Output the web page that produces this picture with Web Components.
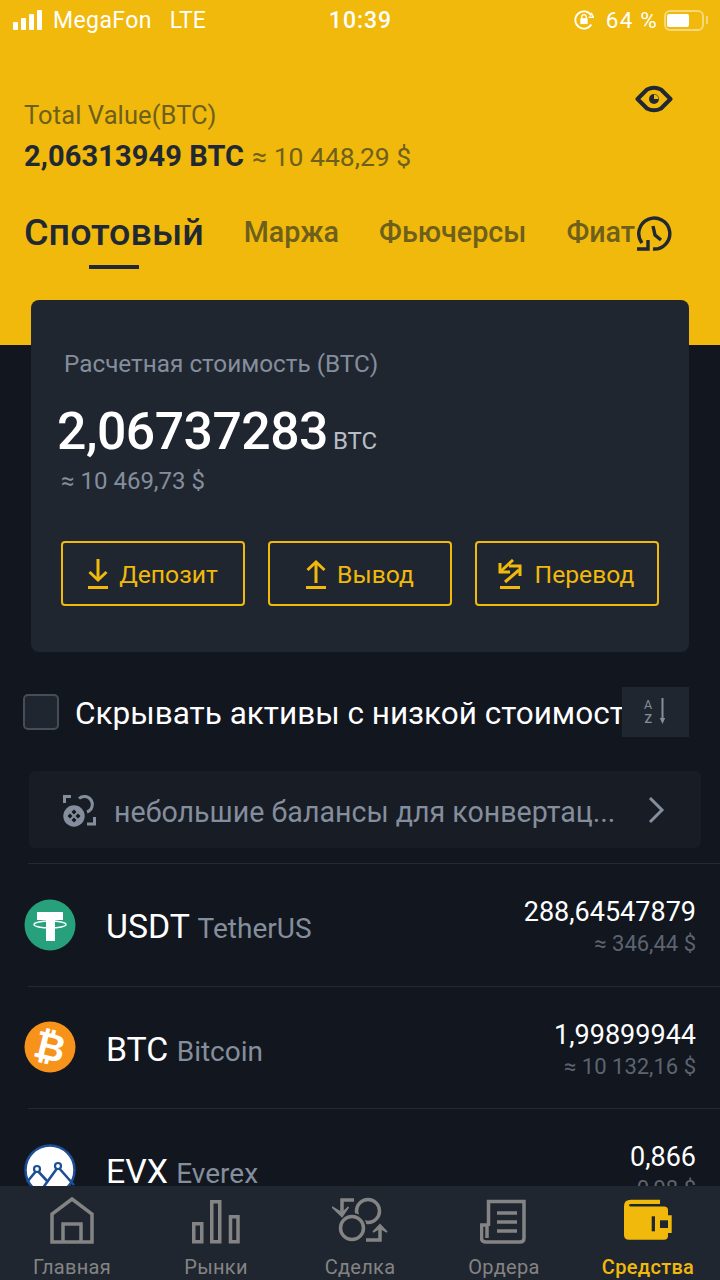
<!DOCTYPE html>
<html>
<head>
<meta charset="utf-8">
<title>Wallet</title>
<style>
    html, body { margin: 0; padding: 0; background: #12161f; }
    body { font-family: Roboto, "Liberation Sans", sans-serif; }
</style>
</head>
<body>
<wallet-app>
    <status-bar></status-bar>
    <wallet-header></wallet-header>
    <spot-card></spot-card>
    <low-filter></low-filter>
    <convert-banner></convert-banner>
    <asset-row coin="usdt" symbol="USDT" name="TetherUS" amount="288,64547879" fiat="≈ 346,44 $"></asset-row>
    <asset-row coin="btc" symbol="BTC" name="Bitcoin" amount="1,99899944" fiat="≈ 10 132,16 $"></asset-row>
    <asset-row coin="evx" symbol="EVX" name="Everex" amount="0,866" fiat="0,98 $"></asset-row>
    <tab-bar slot="nav"></tab-bar>
</wallet-app>

<script>
const ICONS = {
    eye: `<svg width="38" height="28" viewBox="0 0 38 28" fill="none"><path d="M2.5 14 L12 4.5 Q19 1 26 4.5 L35.5 14 L26 23.5 Q19 27 12 23.5 Z" stroke="#212833" stroke-width="4" stroke-linejoin="round"/><circle cx="19" cy="14" r="5" fill="#212833"/><path d="M19 14V9.5A4.5 4.5 0 0 1 23.5 14Z" fill="#f0b90b"/></svg>`,
    history: `<svg width="38" height="38" viewBox="0 0 38 38" fill="none" stroke="#212833" stroke-width="3.4"><path d="M8 28A15.500 15.500 0 1 1 19 34"/><path d="M3 34H14V25"/><path d="M19 11L21 20L27 25"/></svg>`,
    down: `<svg width="26" height="30" viewBox="0 0 26 30" fill="none" stroke="#f0b90b" stroke-width="3"><path d="M13 0V20"/><path d="M4.5 13L13 21L21.500 13"/><path d="M3 28.500H23"/></svg>`,
    up: `<svg width="26" height="30" viewBox="0 0 26 30" fill="none" stroke="#f0b90b" stroke-width="3"><path d="M13 3V24"/><path d="M4.500 11L13 3L21.500 11"/><path d="M3 28.500H23"/></svg>`,
    transfer: `<svg width="26" height="30" viewBox="0 0 26 30" fill="none" stroke="#f0b90b" stroke-width="3"><path d="M16 1L4 12"/><path d="M3 4V13H13"/><path d="M8 23L22 11"/><path d="M12 7H23V17"/><path d="M3 28.500H23"/></svg>`,
    sort: `<svg width="24" height="28" viewBox="0 0 24 28" fill="none"><text x="0" y="11" font-family="Roboto, sans-serif" font-size="12.500" fill="#848e9c">A</text><text x="0.500" y="25" font-family="Roboto, sans-serif" font-size="12.500" font-weight="500" fill="#848e9c">Z</text><path d="M18.500 0V21" stroke="#848e9c" stroke-width="2"/><path d="M15.800 20H21.200L18.500 26Z" fill="#848e9c"/></svg>`,
    convert: `<svg width="36" height="36" viewBox="0 0 36 36" fill="none"><path d="M3.500 11V4.500H10" stroke="#848e9c" stroke-width="3"/><path d="M33.500 25V32H26" stroke="#848e9c" stroke-width="3"/><path d="M18 6.500A8 8 0 1 1 26 20" stroke="#848e9c" stroke-width="3"/><circle cx="13" cy="24" r="10.700" fill="#848e9c"/><path d="M13 17.500L15.500 20L13 22.500L10.500 20ZM13 25.500L15.500 28L13 30.500L10.500 28ZM9 21.500L11.500 24L9 26.500L6.500 24ZM17 21.500L19.500 24L17 26.500L14.500 24Z" fill="#12161f"/></svg>`,
    chevron: `<svg width="18" height="28" viewBox="0 0 18 28" fill="none" stroke="#848e9c" stroke-width="3"><path d="M3 2L15 14L3 26"/></svg>`,
    usdt: `<svg width="52" height="52" viewBox="0 0 52 52"><circle cx="26" cy="26" r="25.500" fill="#26a17b"/><path d="M13 13H39V21H31V42H22V21H13Z" fill="#fff"/><ellipse cx="26" cy="25.500" rx="16" ry="3.500" fill="none" stroke="#fff" stroke-width="1.400"/></svg>`,
    btc: `<svg width="52" height="52" viewBox="0 0 52 52"><circle cx="26" cy="26" r="25.500" fill="#f7931a"/><text x="26" y="39" text-anchor="middle" font-family="Roboto, sans-serif" font-size="38" font-weight="700" fill="#fff" transform="rotate(14 26 26)">₿</text></svg>`,
    evx: `<svg width="52" height="52" viewBox="0 0 52 52"><circle cx="26" cy="26" r="24.500" fill="#fff" stroke="#1d4f97" stroke-width="2.500"/><path d="M3 38L13 26L24 38" fill="none" stroke="#1d4f97" stroke-width="2.600"/><path d="M13 52L34 23L50 41" fill="none" stroke="#1d4f97" stroke-width="2.600"/><circle cx="13" cy="25" r="3" fill="#fff" stroke="#1d4f97" stroke-width="2.200"/><circle cx="34" cy="22" r="3" fill="#fff" stroke="#1d4f97" stroke-width="2.200"/></svg>`,
    home: `<svg width="44" height="48" viewBox="0 0 44 48" fill="none" stroke="#848484" stroke-width="3.500"><path d="M2 46V18L22 3L42 18V46Z"/><path d="M13 46V28H31V46"/></svg>`,
    markets: `<svg width="48" height="48" viewBox="0 0 48 48" fill="none" stroke="#848484" stroke-width="3.500"><rect x="1.750" y="27.750" width="8" height="18"/><rect x="19.750" y="5.750" width="8" height="40"/><rect x="38.500" y="20.750" width="7.500" height="25"/></svg>`,
    trade: `<svg width="56" height="50" viewBox="0 0 56 50" fill="none" stroke="#848484" stroke-width="3.500"><circle cx="36" cy="16" r="11.500"/><circle cx="20" cy="33" r="11.500" fill="#202630" stroke="#202630" stroke-width="7"/><circle cx="20" cy="33" r="11.500"/><path d="M22 5H10V17"/><path d="M0 12L10 21.500L16.500 12L10 18Z" fill="#848484" stroke="#848484" stroke-width="1.500"/><path d="M34 45H48V31"/><path d="M41 37L48 29.500L55 37L48 33Z" fill="#848484" stroke="#848484" stroke-width="1.500"/></svg>`,
    orders: `<svg width="48" height="48" viewBox="0 0 48 48" fill="none" stroke="#848484" stroke-width="3.500"><path d="M8.500 30V5.500H44V42Q44 46 40 46H6Q1.500 46 1.500 42V29H7V42"/><path d="M17 17H37M17 26H37M17 35H37"/></svg>`,
    wallet: `<svg width="48" height="44" viewBox="0 0 48 44"><path d="M7 1.700H36V6H7Q5 6 5 7Q5 8.500 7 8.500H40Q44 8.500 44 12V17.300H47.700V35H44V38Q44 41.700 40 41.700H5Q0 41.700 0 37V8Q0 1.700 7 1.700Z" fill="#f0b90b"/><rect x="27.700" y="18.300" width="3.300" height="15" fill="#202630"/><rect x="36" y="22.300" width="8" height="7.700" fill="#202630"/></svg>`
};

class WalletApp extends HTMLElement {
    constructor() {
        super();
        this.attachShadow({ mode: 'open' });
        this.shadowRoot.innerHTML = `
        <style>
            :host {
                display: block;
                position: relative;
                width: 720px;
                height: 1280px;
                overflow: hidden;
                background: #12161f;
            }
            ::slotted([slot="nav"]) {
                position: absolute;
                left: 0;
                right: 0;
                bottom: 0;
            }
        </style>
        <slot></slot>
        <slot name="nav"></slot>`;
    }
}

class StatusBar extends HTMLElement {
    constructor() {
        super();
        this.attachShadow({ mode: 'open' });
        this.shadowRoot.innerHTML = `
        <style>
            :host {
                display: grid;
                grid-template-columns: 1fr auto 1fr;
                align-items: center;
                height: 40px;
                padding: 0 12px 0 13px;
                background: #f0b90b;
                color: #fff;
                font: 400 23px Roboto, sans-serif;
            }
            .left, .right { display: flex; align-items: center; }
            .right { justify-content: flex-end; }
            .bars { display: flex; align-items: flex-end; gap: 3px; margin-right: 11px; height: 20px; }
            .bars i { display: block; width: 5px; background: #fff; border-radius: 1px; }
            .name { letter-spacing: .4px; }
            .lte { margin-left: 18px; }
            .time { font-weight: 500; letter-spacing: 1px; }
            .pct { margin: 0 6px 0 12px; font-size: 22.500px; letter-spacing: 1.200px; }
            .battery { position: relative; width: 40px; height: 21px; border: 2px solid rgba(255,255,255,.45); border-radius: 6px; box-sizing: border-box; }
            .battery::before { content: ""; position: absolute; left: 1px; top: 2px; bottom: 2px; width: 22px; background: #fff; border-radius: 2px; }
            .cap { width: 2px; height: 8px; margin-left: 2px; background: rgba(255,255,255,.45); }
        </style>
        <div class="left">
            <div class="bars"><i style="height:8px"></i><i style="height:12px"></i><i style="height:16px"></i><i style="height:20px"></i></div>
            <span class="name">MegaFon</span><span class="lte">LTE</span>
        </div>
        <div class="time">10:39</div>
        <div class="right">
            <svg width="20" height="20" viewBox="0 0 22 22" fill="none" stroke="#fff" stroke-width="2"><path d="M19 6A9.500 9.500 0 1 0 19 16"/><path d="M16 8L21.500 8L19 3" stroke-width="1.500"/><rect x="7" y="9" width="8" height="6.500" fill="#fff" stroke="none"/><path d="M8.500 9V7.500A2.500 2.500 0 0 1 13.500 7.500V9" stroke-width="1.400"/></svg>
            <span class="pct">64 %</span>
            <div class="battery"></div><div class="cap"></div>
        </div>`;
    }
}

class WalletHeader extends HTMLElement {
    constructor() {
        super();
        this.attachShadow({ mode: 'open' });
        this.shadowRoot.innerHTML = `
        <style>
            :host {
                display: block;
                position: relative;
                height: 305px;
                box-sizing: border-box;
                padding: 60px 0 0 24px;
                background: #f0b90b;
                color: #212833;
                overflow: hidden;
            }
            .label { font-size: 25.500px; line-height: 30px; color: #6e5f1c; letter-spacing: .1px; }
            .total { display: flex; align-items: baseline; margin-top: 10px; line-height: 32px; }
            .total b { font-size: 29px; font-weight: 700; letter-spacing: .1px; }
            .total span { margin-left: 8px; font-size: 26.500px; color: #6e5f1c; }
            .eye { position: absolute; right: 47px; top: 45px; }
            .tabs { display: flex; align-items: center; margin-top: 37px; white-space: nowrap; }
            .tab { font-size: 28.700px; color: #6e5f1c; margin-left: 40px; font-weight: 500; }
            .tab.on { font-size: 37.700px; font-weight: 500; color: #212833; margin-left: 0; }
            .bar { width: 50px; height: 3.500px; margin: 11px 0 0 65px; background: #212833; }
            .history { position: absolute; right: 48px; top: 175px; }
        </style>
        <div class="label">Total Value(BTC)</div>
        <div class="total"><b>2,06313949 BTC</b><span>≈ 10 448,29 $</span></div>
        <div class="tabs">
            <div class="tab on">Спотовый</div>
            <div class="tab">Маржа</div>
            <div class="tab">Фьючерсы</div>
            <div class="tab">Фиат</div>
        </div>
        <div class="bar"></div>
        <div class="eye">${ICONS.eye}</div>
        <div class="history">${ICONS.history}</div>`;
    }
}

class ActionButton extends HTMLElement {
    constructor() {
        super();
        this.attachShadow({ mode: 'open' });
        this.shadowRoot.innerHTML = `
        <style>
            :host {
                display: flex;
                align-items: center;
                justify-content: center;
                gap: 8px;
                box-sizing: border-box;
                height: 65px;
                padding-right: 3px;
                border: 2px solid #f0b90b;
                border-radius: 4px;
                color: #f0b90b;
                font-size: 24.700px;
            }
            svg { display: block; }
            .text { padding-top: 1px; }
        </style>
        <span id="icon"></span><span class="text"><slot></slot></span>`;
    }

    connectedCallback() {
        this.shadowRoot.getElementById('icon').innerHTML = ICONS[this.getAttribute('icon')];
    }
}

class SpotCard extends HTMLElement {
    constructor() {
        super();
        this.attachShadow({ mode: 'open' });
        this.shadowRoot.innerHTML = `
        <style>
            :host {
                display: block;
                position: relative;
                box-sizing: border-box;
                width: 658px;
                height: 352px;
                margin: -45px 0 0 31px;
                padding: 50px 30px 0 30px;
                background: #202630;
                border-radius: 8px;
                color: #848e9c;
            }
            .label { margin-left: 3px; font-size: 24.300px; line-height: 28px; }
            .value { display: flex; align-items: baseline; margin: 24px 0 0 -4px; color: #fff; line-height: 60px; }
            .value b { font-size: 51.700px; font-weight: 500; letter-spacing: -.5px; }
            .value span { margin-left: 5px; font-size: 24px; color: #b7bdc6; }
            .fiat { margin-top: -5px; font-size: 24px; line-height: 30px; }
            .actions { display: grid; grid-template-columns: repeat(3, 184px); gap: 23px; margin-top: 45px; }
        </style>
        <div class="label">Расчетная стоимость (BTC)</div>
        <div class="value"><b>2,06737283</b><span>BTC</span></div>
        <div class="fiat">≈ 10 469,73 $</div>
        <div class="actions">
            <action-button icon="down">Депозит</action-button>
            <action-button icon="up">Вывод</action-button>
            <action-button icon="transfer" style="gap:12px">Перевод</action-button>
        </div>`;
    }
}

class LowFilter extends HTMLElement {
    constructor() {
        super();
        this.attachShadow({ mode: 'open' });
        this.shadowRoot.innerHTML = `
        <style>
            :host {
                display: flex;
                align-items: center;
                position: relative;
                height: 50px;
                margin-top: 35px;
                padding-left: 23px;
                color: #fff;
                font-size: 31.500px;
                white-space: nowrap;
            }
            .box {
                flex: none;
                box-sizing: border-box;
                width: 36px;
                height: 36px;
                margin-right: 16px;
                background: #202630;
                border: 2px solid #474d57;
                border-radius: 5px;
            }
            .text { padding-top: 2px; }
            .sort {
                position: absolute;
                left: 622px;
                top: 0;
                width: 67px;
                height: 50px;
                display: flex;
                align-items: center;
                justify-content: center;
                background: #202630;
            }
        </style>
        <div class="box"></div>
        <span class="text">Скрывать активы с низкой стоимост</span>
        <div class="sort">${ICONS.sort}</div>`;
    }
}

class ConvertBanner extends HTMLElement {
    constructor() {
        super();
        this.attachShadow({ mode: 'open' });
        this.shadowRoot.innerHTML = `
        <style>
            :host {
                display: flex;
                align-items: center;
                box-sizing: border-box;
                height: 77px;
                margin: 34px 19px 15px 29px;
                padding: 0 36px 0 32px;
                background: #181c25;
                border-radius: 6px;
                color: #848e9c;
                font-size: 28.600px;
            }
            span { flex: 1; margin-left: 17px; padding-top: 4px; white-space: nowrap; }
            svg { display: block; }
        </style>
        ${ICONS.convert}
        <span>небольшие балансы для конвертац...</span>
        ${ICONS.chevron}`;
    }
}

class AssetRow extends HTMLElement {
    constructor() {
        super();
        this.attachShadow({ mode: 'open' });
    }

    connectedCallback() {
        this.shadowRoot.innerHTML = `
        <style>
            :host {
                display: flex;
                align-items: center;
                box-sizing: border-box;
                height: 122.500px;
                margin-left: 28px;
                padding-right: 24px;
                border-top: 1px solid #242933;
            }
            .coin { flex: none; display: block; width: 52px; height: 52px; margin: 0 30px 0 -4px; }
            .coin svg { display: block; }
            .title { flex: 1; padding-top: 4px; white-space: nowrap; color: #fff; font-size: 33.800px; }
            .title span { font-size: 28px; color: #848e9c; }
            .nums { text-align: right; margin-top: 5px; }
            .amount { color: #fff; font-size: 27px; line-height: 34px; }
            .fiat { color: #5c6470; font-size: 22px; line-height: 30px; }
        </style>
        <div class="coin">${ICONS[this.getAttribute('coin')]}</div>
        <div class="title">${this.getAttribute('symbol')} <span>${this.getAttribute('name')}</span></div>
        <div class="nums">
            <div class="amount">${this.getAttribute('amount')}</div>
            <div class="fiat">${this.getAttribute('fiat')}</div>
        </div>`;
    }
}

class TabItem extends HTMLElement {
    constructor() {
        super();
        this.attachShadow({ mode: 'open' });
        this.shadowRoot.innerHTML = `
        <style>
            :host {
                flex: 1;
                display: flex;
                flex-direction: column;
                align-items: center;
                color: #848484;
                font-size: 20px;
            }
            :host([active]) { color: #f0b90b; font-weight: 500; }
            #icon { display: flex; align-items: center; justify-content: center; height: 58px; }
            svg { display: block; }
            .label { margin-top: 6px; letter-spacing: .3px; }
        </style>
        <div id="icon"></div>
        <div class="label"><slot></slot></div>`;
    }

    connectedCallback() {
        this.shadowRoot.getElementById('icon').innerHTML = ICONS[this.getAttribute('icon')];
    }
}

class TabBar extends HTMLElement {
    constructor() {
        super();
        this.attachShadow({ mode: 'open' });
        this.shadowRoot.innerHTML = `
        <style>
            :host {
                display: flex;
                box-sizing: border-box;
                height: 94px;
                padding-top: 5px;
                background: #202630;
            }
        </style>
        <tab-item icon="home">Главная</tab-item>
        <tab-item icon="markets">Рынки</tab-item>
        <tab-item icon="trade">Сделка</tab-item>
        <tab-item icon="orders">Ордера</tab-item>
        <tab-item icon="wallet" active>Средства</tab-item>`;
    }
}

customElements.define('wallet-app', WalletApp);
customElements.define('status-bar', StatusBar);
customElements.define('wallet-header', WalletHeader);
customElements.define('action-button', ActionButton);
customElements.define('spot-card', SpotCard);
customElements.define('low-filter', LowFilter);
customElements.define('convert-banner', ConvertBanner);
customElements.define('asset-row', AssetRow);
customElements.define('tab-item', TabItem);
customElements.define('tab-bar', TabBar);
</script>
</body>
</html>
